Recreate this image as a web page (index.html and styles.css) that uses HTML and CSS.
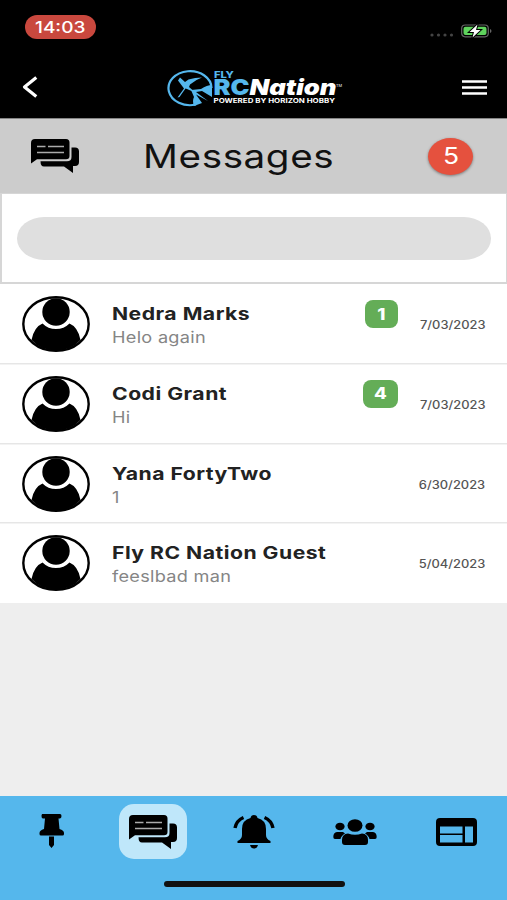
FILE: index.html
```html
<!DOCTYPE html>
<html lang="en">
<head>
<meta charset="utf-8">
<meta name="viewport" content="width=device-width, initial-scale=1">
<title>Messages</title>
<link rel="stylesheet" href="styles.css">
</head>
<body>
<svg width="0" height="0" class="defs" aria-hidden="true">
  <symbol id="chat" viewBox="0 0 48 34">
    <path d="M4 0H35Q38.500 0 38.500 3.500V17Q38.500 20.300 35 20.300H6L0 24.500V4Q0 0 4 0Z"/>
    <path d="M40.500 8.500H44Q48 8.500 48 12.500V23Q48 27 44 27H42V34L33 27.500H13Q9.500 27.500 9.500 22.300H36Q40.500 22.300 40.500 18Z"/>
    <path d="M6 7.500H14.500M17 7.500H33M6 13.500H33" fill="none" stroke="#aaa" stroke-width="1.300"/>
  </symbol>
  <symbol id="person" viewBox="0 0 68 56">
    <ellipse cx="34" cy="28" rx="32.700" ry="26.800" fill="#fff" stroke="#000" stroke-width="2.400"/>
    <ellipse cx="34" cy="16" rx="13.700" ry="13.700"/>
    <path d="M20.500 27.500Q26 33 34 33T47.500 27.500Q56 31 58.500 44Q49 54.500 34 54.500T9.500 44Q12 31 20.500 27.500Z"/>
  </symbol>
</svg>
<div class="app">
  <header class="top">
    <div class="status">
      <div class="clock"><span>14:03</span></div>
      <div class="signals">
        <svg class="dots" viewBox="0 0 24 4"><g fill="#444"><circle cx="2" cy="2" r="1.600"/><circle cx="8.500" cy="2" r="1.600"/><circle cx="15" cy="2" r="1.600"/><circle cx="21.500" cy="2" r="1.600"/></g></svg>
        <svg class="battery" viewBox="0 0 31 16">
          <rect x=".7" y="2" width="26.600" height="11.800" rx="3.500" fill="none" stroke="#666" stroke-width="1.200"/>
          <rect x="2.500" y="3.800" width="23" height="8.200" rx="2" fill="#5fd35d"/>
          <path d="M29 6v4q1.500-.5 1.500-2T29 6Z" fill="#666"/>
          <path d="M16.500 1.500L8.500 9H13L11.500 14.500L19.500 7H15Z" fill="#fff" stroke="#000" stroke-width="2" paint-order="stroke"/>
        </svg>
      </div>
    </div>
    <nav class="navbar">
      <svg class="back" viewBox="0 0 16 22"><path d="M14.300 1.500L2.500 11L14.300 20.500" fill="none" stroke="#fff" stroke-width="3.200" stroke-linejoin="round"/></svg>
      <svg class="logo" viewBox="0 0 176 40" role="img" aria-label="Fly RC Nation">
        <path d="M29 36.500A21.500 17 0 1 1 44.500 20" fill="none" stroke="#55b7ed" stroke-width="2.200"/>
        <path d="M10.500 29.500L17 20.500L11 12.500L13 9.500L18 14L21.500 11.500Q28 9.500 35 9.500Q29 11.500 23 16.500L22 19L29 25L20 21L18.500 20.500L12.500 29Z" fill="#55b7ed"/>
        <path d="M24 22L34 21Q40 17 45 17V29L35 23L29 24L41 33L29 26.500L35 35L27 38Q25 33 27 29Z" fill="#55b7ed"/>
        <g font-family="Inter, sans-serif">
          <text x="47" y="9.800" font-size="8.500" font-weight="800" fill="#55b7ed" textLength="20" lengthAdjust="spacingAndGlyphs">FLY</text>
          <text x="46.500" y="27.300" font-size="21.500" font-weight="900" fill="#55b7ed" textLength="36" lengthAdjust="spacingAndGlyphs">RC</text>
          <text x="82.500" y="27.300" font-size="21.500" font-weight="900" font-style="italic" fill="#fff" textLength="87" lengthAdjust="spacingAndGlyphs">Nation</text>
          <text x="169" y="18.500" font-size="3.500" fill="#fff" textLength="6" lengthAdjust="spacingAndGlyphs">TM</text>
          <text x="46.500" y="35.300" font-size="6.500" font-weight="700" fill="#fff" textLength="121.500" lengthAdjust="spacingAndGlyphs">POWERED BY HORIZON HOBBY</text>
        </g>
      </svg>
      <svg class="menu" viewBox="0 0 25 15"><path d="M0 1.500H25M0 7.500H25M0 13.500H25" stroke="#fff" stroke-width="2.400"/></svg>
    </nav>
  </header>
  <section class="heading">
    <svg class="chat"><use href="#chat"/></svg>
    <h1><span>Messages</span></h1>
    <div class="total"><span>5</span></div>
  </section>
  <div class="search"><div class="field"></div></div>
  <main class="list">
    <article class="row">
      <svg class="avatar"><use href="#person"/></svg>
      <div class="who"><h2>Nedra Marks</h2><p>Helo again</p></div>
      <div class="count"><span>1</span></div>
      <time><span>7/03/2023</span></time>
    </article>
    <article class="row">
      <svg class="avatar"><use href="#person"/></svg>
      <div class="who"><h2>Codi Grant</h2><p>Hi</p></div>
      <div class="count wide"><span>4</span></div>
      <time><span>7/03/2023</span></time>
    </article>
    <article class="row">
      <svg class="avatar"><use href="#person"/></svg>
      <div class="who"><h2>Yana FortyTwo</h2><p>1</p></div>
      <time><span>6/30/2023</span></time>
    </article>
    <article class="row">
      <svg class="avatar"><use href="#person"/></svg>
      <div class="who"><h2>Fly RC Nation Guest</h2><p>feeslbad man</p></div>
      <time><span>5/04/2023</span></time>
    </article>
  </main>
  <footer class="tabs">
    <div class="icons">
      <div class="tab"><svg width="26" height="35" viewBox="0 0 26 35"><path d="M4 0H21Q22.500 0 22.500 2T21 4.500H19.500L20.500 15Q25 16.500 25 19V20Q25 21.500 23.500 21.500H2Q.5 21.500 .5 20V19Q.5 16.500 5 15L6 4.500H4Q2.500 4.500 2.500 2T4 0ZM10 22.500H15V31L12.500 34L10 31Z"/></svg></div>
      <div class="tab active"><svg class="chat"><use href="#chat"/></svg></div>
      <div class="tab"><svg width="42" height="34" viewBox="0 0 42 34"><path d="M17.500 3Q18 0 21 0T24.500 3Q33 5 33 14V20Q33 24 37.500 26V28H4.500V26Q9 24 9 20V14Q9 5 17.500 3ZM17 30H25Q24 33.500 21 33.500T17 30Z"/><path d="M10.500 2.500Q3.500 5.500 2 13M31.500 2.500Q38.500 5.500 40 13" fill="none" stroke="#000" stroke-width="3.400"/></svg></div>
      <div class="tab"><svg width="44" height="26" viewBox="0 0 44 26"><ellipse cx="22" cy="6.500" rx="7.500" ry="6.300"/><ellipse cx="7" cy="7.500" rx="4.600" ry="3.800"/><ellipse cx="37" cy="7.500" rx="4.600" ry="3.800"/><path d="M15 14.500Q22 17 29 14.500Q35 15 35 21V23Q35 26 32 26H12Q9 26 9 23V21Q9 15 15 14.500ZM4 13H10L12 14.500Q8 17 7.500 20H2Q.3 20 .3 18Q.3 13.500 4 13ZM40 13H34L32 14.500Q36 17 36.500 20H42Q43.700 20 43.700 18Q43.700 13.500 40 13Z"/></svg></div>
      <div class="tab"><svg width="41" height="28" viewBox="0 0 41 28"><path fill-rule="evenodd" d="M4 0H37Q41 0 41 4V24Q41 28 37 28H4Q0 28 0 24V4Q0 0 4 0ZM4 8.500V15.500H26.500V8.500ZM4 17V24.500H26.500V17ZM29 8.500V24.500H37V8.500Z"/></svg></div>
    </div>
    <div class="home"></div>
  </footer>
</div>
</body>
</html>
```
FILE: styles.css
```css
* { box-sizing: border-box; }
body { margin: 0; font-family: Inter, "Liberation Sans", sans-serif; }
h1, h2, p { margin: 0; }
.defs { display: block; height: 0; }
.app { width: 507px; height: 900px; display: flex; flex-direction: column; background: #eee; overflow: hidden; }
svg { display: block; flex: none; }

.top { height: 118px; background: #000; }
.status { display: flex; justify-content: space-between; height: 60px; padding: 15px 15px 0 25px; }
.clock { width: 71px; height: 24px; border-radius: 12px; background: #c9483e; color: #fff; display: flex; align-items: center; justify-content: center; font-size: 16px; font-weight: 500; }
.clock span { transform: scaleX(1.19); }
.signals { display: flex; gap: 7px; padding-top: 8px; }
.dots { width: 24px; height: 4px; margin-top: 10px; }
.battery { width: 31px; height: 16px; }
.navbar { display: flex; align-items: flex-start; padding: 6px 20px 0 22px; }
.back { width: 16px; height: 22px; margin-top: 10px; }
.logo { width: 176px; height: 40px; margin-left: 129px; margin-top: 2px; }
.menu { width: 25px; height: 15px; margin: 14px 0 0 auto; }

.heading { height: 75px; background: #ccc; border-top: 1px solid #858585; display: flex; align-items: center; padding: 0 34px 0 31px; }
.chat { width: 48px; height: 34px; }
.heading h1 { flex: 1; font-size: 33px; font-weight: 400; text-align: center; color: #111; padding-right: 62px; margin-left: 32px; }
.heading h1 span { display: inline-block; transform: scaleX(1.17); letter-spacing: .5px; }
.total { width: 45px; height: 37px; border-radius: 50%; background: #e5513e; box-shadow: 0 1px 3px rgba(0, 0, 0, .4); color: #fff; font-size: 23px; display: flex; align-items: center; justify-content: center; }
.total span { transform: scaleX(1.15); }

.search { height: 91px; background: #fff; border: solid #d6d6d6; border-width: 1px 1px 2px 2px; padding: 23px 15px; }
.field { height: 43px; border-radius: 27px / 21.500px; background: #dfdfdf; }

.list { height: 319px; background: #fff; display: grid; grid-template-rows: repeat(4, 1fr); }
.row { display: flex; align-items: flex-start; padding: 12px 22px 0 22px; }
.row + .row { box-shadow: 0 -1px 0 #e6e6e6, inset 0 1px 0 #f3f3f3; }
.avatar { width: 68px; height: 56px; }
.who { flex: 1; min-width: 0; margin: 6px 0 0 22px; white-space: nowrap; }
.who h2 { font-size: 17.500px; line-height: 23px; font-weight: 700; color: #222; transform: scaleX(1.21); transform-origin: left; letter-spacing: .4px; }
.who p { margin-top: 1px; font-size: 15.500px; line-height: 23px; color: #858585; transform: scaleX(1.17); transform-origin: left; letter-spacing: .25px; }
.count { width: 33px; height: 28px; margin: 4px 20px 0 0; border-radius: 8px; background: #64ad57; color: #fff; font-size: 15.500px; font-weight: 800; display: flex; align-items: center; justify-content: center; }
.count.wide { width: 35px; }
.count span { transform: scaleX(1.2); }
time { width: 67px; margin-top: 21px; font-size: 11.300px; line-height: 16px; font-weight: 500; color: #555; display: flex; justify-content: flex-end; }
time span { transform: scaleX(1.14); transform-origin: right; }

.tabs { margin-top: auto; height: 104px; background: #55b7ec; padding-top: 8px; }
.icons { display: flex; justify-content: space-between; padding: 0 17px 0 18px; }
.tab { width: 68px; height: 55px; display: flex; align-items: center; justify-content: center; }
.tab.active { background: #bfe7fa; border-radius: 15px; }
.home { width: 181px; height: 6px; border-radius: 3px; background: #111; margin: 22px 162px 0 164px; }
```
